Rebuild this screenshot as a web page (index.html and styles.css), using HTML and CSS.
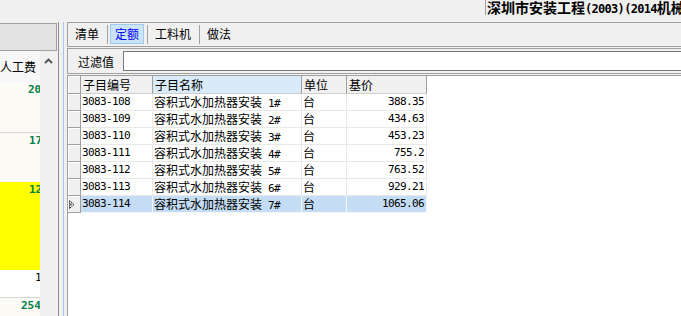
FILE: index.html
```html
<!DOCTYPE html>
<html lang="zh-CN">
<head>
<meta charset="utf-8">
<title>定额</title>
<link rel="stylesheet" href="styles.css">
</head>
<body>
<div class="app">
  <div class="top">
    <div class="title">深圳市安装工程<span class="m">(2003)(2014</span>机械</div>
  </div>
  <div class="main">
    <div class="left">
      <div class="lhead"></div>
      <div class="lbody">
        <div class="lcol">
          <div class="lch">人工费</div>
          <div class="lr r1" style="padding-left:28px">20</div>
          <div class="lr r2" style="padding-left:29px">17</div>
          <div class="lr r3" style="padding-left:29px">12</div>
          <div class="lr r4" style="padding-left:35px">1</div>
          <div class="lr r5" style="padding-left:21px">254</div>
        </div>
        <div class="lscroll">
          <svg class="chev" width="9" height="6" viewBox="0 0 9 6"><polyline points="1,5 4.5,1.5 8,5" fill="none" stroke="#505050" stroke-width="1.8"/></svg>
        </div>
      </div>
    </div>
    <div class="split"><i class="sa"></i><i class="sb"></i></div>
    <div class="right">
      <div class="tabs">
        <div class="tab">清单</div>
        <div class="sep"></div>
        <div class="tab on">定额</div>
        <div class="sep"></div>
        <div class="tab">工料机</div>
        <div class="sep"></div>
        <div class="tab">做法</div>
      </div>
      <div class="filter">
        <div class="flabel">过滤值</div>
        <div class="finput"></div>
      </div>
      <div class="grid">
        <div class="row hrow">
          <div class="ind"></div>
          <div>子目编号</div>
          <div class="hl">子目名称</div>
          <div>单位</div>
          <div>基价</div>
        </div>
        <div class="row">
          <div class="ind"></div>
          <div class="m">3083-108</div>
          <div>容积式水加热器安装<span class="m"> 1#</span></div>
          <div>台</div>
          <div class="m num">388.35</div>
        </div>
        <div class="row">
          <div class="ind"></div>
          <div class="m">3083-109</div>
          <div>容积式水加热器安装<span class="m"> 2#</span></div>
          <div>台</div>
          <div class="m num">434.63</div>
        </div>
        <div class="row">
          <div class="ind"></div>
          <div class="m">3083-110</div>
          <div>容积式水加热器安装<span class="m"> 3#</span></div>
          <div>台</div>
          <div class="m num">453.23</div>
        </div>
        <div class="row">
          <div class="ind"></div>
          <div class="m">3083-111</div>
          <div>容积式水加热器安装<span class="m"> 4#</span></div>
          <div>台</div>
          <div class="m num">755.2</div>
        </div>
        <div class="row">
          <div class="ind"></div>
          <div class="m">3083-112</div>
          <div>容积式水加热器安装<span class="m"> 5#</span></div>
          <div>台</div>
          <div class="m num">763.52</div>
        </div>
        <div class="row">
          <div class="ind"></div>
          <div class="m">3083-113</div>
          <div>容积式水加热器安装<span class="m"> 6#</span></div>
          <div>台</div>
          <div class="m num">929.21</div>
        </div>
        <div class="row sel">
          <div class="ind"><svg class="tri" width="6" height="9" viewBox="0 0 6 9"><polygon points="0.5,0.5 5,4.5 0.5,8.5" fill="none" stroke="#000" stroke-width="1" stroke-dasharray="1.2 0.8"/><rect x="1.5" y="3.5" width="1" height="2" fill="#000"/></svg></div>
          <div class="m">3083-114</div>
          <div>容积式水加热器安装<span class="m"> 7#</span></div>
          <div>台</div>
          <div class="m num">1065.06</div>
        </div>
      </div>
    </div>
  </div>
</div>
</body>
</html>
```

FILE: styles.css
```css
* { box-sizing: border-box; }

body {
  margin: 0;
  background: #f0f0f0;
  font-family: "Noto Sans CJK SC", sans-serif;
  font-size: 12px;
  color: #000;
}

.app {
  width: 681px;
  height: 316px;
  overflow: hidden;
  display: flex;
  flex-direction: column;
}

.m {
  font-family: "DejaVu Sans Mono", "Liberation Mono", monospace;
  font-size: 11px;
  letter-spacing: -0.62px;
}

/* top bar */
.top {
  height: 22px;
  flex: none;
  display: flex;
  overflow: hidden;
}

.title {
  margin-left: 485px;
  height: 15px;
  border-left: 1px solid #a0a0a0;
  padding-left: 1px;
  font-weight: 700;
  font-size: 14px;
  line-height: 15px;
  white-space: nowrap;
}

.title .m {
  font-size: 12px;
  letter-spacing: -0.7px;
  font-weight: 700;
}

.main {
  flex: 1;
  display: flex;
  min-height: 0;
}

/* left panel */
.left {
  width: 57px;
  flex: none;
  display: flex;
  flex-direction: column;
}

.lhead {
  margin-top: 1px;
  height: 28px;
  flex: none;
  background: #e3e3e3;
  border-top: 1px solid #a0a0a0;
  border-bottom: 1px solid #a0a0a0;
  border-right: 1px solid #a0a0a0;
}

.lbody {
  flex: 1;
  display: flex;
  min-height: 0;
}

.lcol {
  width: 40px;
  flex: none;
  background: #fff;
  overflow: hidden;
  display: flex;
  flex-direction: column;
}

.lch {
  height: 31px;
  flex: none;
  background: #f7f7f7;
  text-align: right;
  padding-right: 4px;
  line-height: 31px;
  white-space: nowrap;
}

.lr {
  flex: none;
  white-space: nowrap;
  overflow: hidden;
  font-family: "DejaVu Sans Mono", "Liberation Mono", monospace;
  font-weight: 700;
  font-size: 11px;
  line-height: 13px;
  padding-top: 1px;
  color: #00814a;
}

.r1 { height: 51px; background: #fcfaf4; border-bottom: 1px solid #d6d6d6; }
.r2 { height: 49px; background: #fcfaf4; }
.r3 { height: 88px; background: #ffff00; }
.r4 { height: 28px; background: #fff; color: #000; font-weight: 400; border-bottom: 1px solid #d6d6d6; }
.r5 { flex: 1; background: #fcfaf4; }

.lscroll {
  width: 17px;
  flex: none;
  background: #f0f0f0;
}

.chev {
  display: block;
  margin: 7px 0 0 4px;
}

/* splitter */
.split {
  width: 10px;
  flex: none;
  display: flex;
}

.sa {
  width: 1px;
  margin-left: 1px;
  background: #8e8e8e;
}

.sb {
  width: 1px;
  margin-left: 4px;
  background: #a9c6e8;
}

/* right panel */
.right {
  flex: 1;
  min-width: 0;
  display: flex;
  flex-direction: column;
}

.tabs {
  height: 25px;
  flex: none;
  border: 1px solid #a0a0a0;
  border-right: 0;
  display: flex;
  align-items: flex-start;
  padding: 1px 0 0 2px;
}

.tab {
  height: 20px;
  border: 1px solid transparent;
  padding: 0 4px;
  line-height: 18px;
  white-space: nowrap;
}

.tab.on {
  background: #cce4f7;
  border-color: #9fcbef;
  color: #0000ff;
}

.sep {
  width: 1px;
  height: 19px;
  margin: 1px 2px 0 3px;
  background: #a0a0a0;
}

.filter {
  margin-top: 1px;
  height: 26px;
  flex: none;
  border: 1px solid #a0a0a0;
  border-right: 0;
  display: flex;
  align-items: center;
  padding-left: 10px;
}

.flabel {
  width: 36px;
  margin-right: 9px;
  white-space: nowrap;
}

.finput {
  flex: 1;
  height: 20px;
  background: #fff;
  border: 1px solid #7a7a7a;
  border-right: 0;
}

/* grid */
.grid {
  margin-top: 1px;
  flex: 1;
  background: #fff;
  border-top: 1px solid #a0a0a0;
  border-left: 1px solid #a0a0a0;
}

.row {
  display: grid;
  grid-template-columns: 13px 72px 149px 45px 80px;
  height: 17px;
}

.row > div {
  border-right: 1px solid #e8e8e8;
  border-bottom: 1px solid #e8e8e8;
  padding-left: 1px;
  line-height: 16px;
  white-space: nowrap;
  overflow: hidden;
}

.hrow {
  height: 18px;
}

.hrow > div {
  background: #f0f0f0;
  border-right-color: #a0a0a0;
  border-bottom-color: #cfcfcf;
  padding-left: 2px;
  line-height: 17px;
}

.hrow > .hl {
  background: #d9eaf8;
}

.row > .ind {
  background: #f0f0f0;
  border-right-color: #a0a0a0;
  border-bottom-color: #a0a0a0;
  box-shadow: inset 1px 1px 0 #fff;
  padding-left: 1px;
}

.sel > div {
  background: #c4ddf5;
  border-right-color: #f4f8fc;
  border-bottom-color: #f4f8fc;
}

.tri {
  display: block;
  margin-top: 4px;
}

.row > .num {
  text-align: right;
  padding-right: 2px;
}
```
